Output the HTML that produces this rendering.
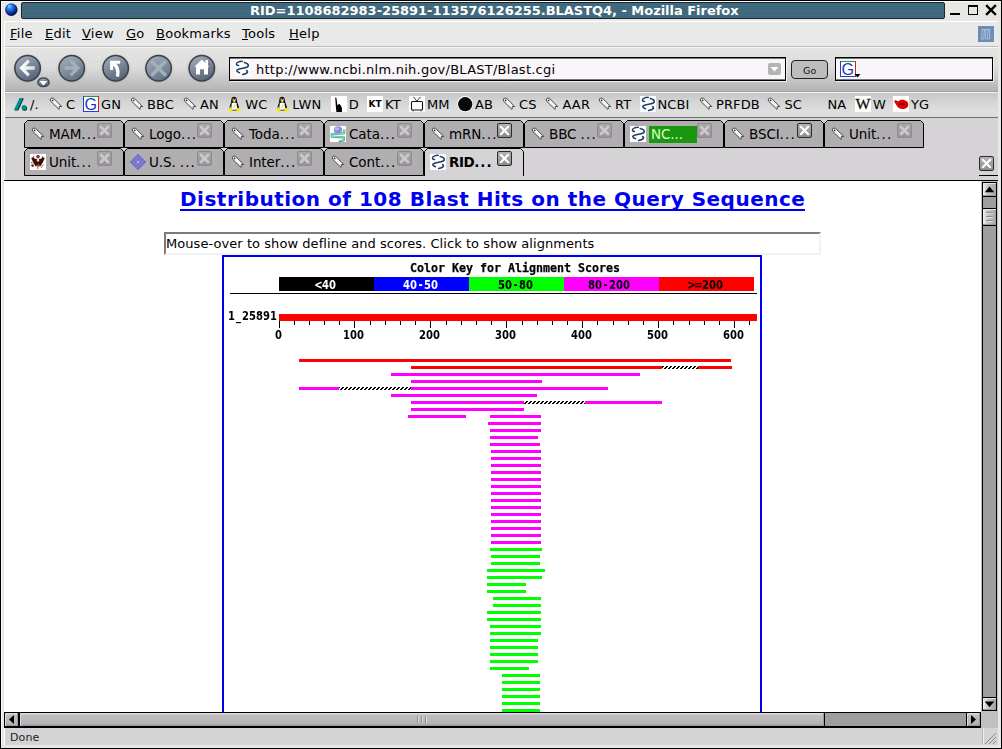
<!DOCTYPE html>
<html><head><meta charset="utf-8"><title>RID=1108682983-25891-113576126255.BLASTQ4, - Mozilla Firefox</title>
<style>
html,body{margin:0;padding:0;}
body{width:1002px;height:749px;overflow:hidden;position:relative;background:#e9e7e3;font-family:"DejaVu Sans","Liberation Sans",sans-serif;font-size:13px;color:#000;}
.a{position:absolute;}
.t{position:absolute;white-space:nowrap;line-height:16px;height:16px;letter-spacing:0.25px;}
u{text-decoration:underline;}
svg{position:absolute;overflow:visible;}
</style></head>
<body>
<div class="a" style="left:0px;top:0px;width:1002px;height:749px;background:#000;"></div>
<div class="a" style="left:1px;top:1px;width:1000px;height:747px;background:#e9e7e3;"></div>
<div class="a" style="left:1px;top:1px;width:1000px;height:1px;background:#fbfaf8;"></div>
<div class="a" style="left:1px;top:1px;width:1px;height:747px;background:#fbfaf8;"></div>
<div class="a" style="left:21px;top:2px;width:924px;height:17px;background:#3e6579;background-image:repeating-linear-gradient(to bottom,#456d81 0,#456d81 1px,#3e667a 1px,#3e667a 2px);border:1px solid #17252d;border-radius:2px;box-sizing:border-box;"></div>
<div class="t" style="left:250px;top:3px;color:#fff;font-weight:bold;font-size:13px;letter-spacing:-0.025px;">RID=1108682983-25891-113576126255.BLASTQ4, - Mozilla Firefox</div>
<div class="a" style="left:4px;top:21px;width:994px;height:724px;background:#fff;"></div>
<div class="a" style="left:5px;top:22px;width:993px;height:24px;background:#e9e9e9;"></div>
<div class="a" style="left:5px;top:46px;width:993px;height:1px;background:#bdbdbd;"></div>
<div class="a" style="left:5px;top:47px;width:993px;height:1px;background:#f6f6f6;"></div>
<div class="a" style="left:5px;top:48px;width:993px;height:43px;background:#d0d0d0;background:linear-gradient(to bottom,#e4e4e2 0%,#dcdcdc 45%,#c6c6c6 75%,#b4b4b4 100%);"></div>
<div class="a" style="left:5px;top:91px;width:993px;height:1px;background:#a0a0a0;"></div>
<div class="a" style="left:5px;top:92px;width:993px;height:1px;background:#f4f4f4;"></div>
<div class="a" style="left:5px;top:93px;width:993px;height:24px;background:#dadada;background:linear-gradient(to bottom,#c6c6c6 0%,#d4d4d4 35%,#dedede 75%,#dcdcdc 100%);"></div>
<div class="a" style="left:5px;top:117px;width:993px;height:1px;background:#6e6e6e;"></div>
<div class="a" style="left:5px;top:118px;width:993px;height:62px;background:#d5d3d5;"></div>
<div class="a" style="left:4px;top:180px;width:994px;height:1px;background:#000;"></div>
<div class="a" style="left:4px;top:181px;width:978px;height:531px;background:#fff;"></div>
<div class="a" style="left:4px;top:712px;width:994px;height:16px;background:#c1bfc1;"></div>
<div class="a" style="left:5px;top:728px;width:993px;height:17px;background:#d5d3d5;"></div>
<div class="a" style="left:1px;top:745px;width:1000px;height:3px;background:#e9e7e3;"></div>
<div class="t" style="left:10px;top:26px;"><u>F</u>ile</div>
<div class="t" style="left:45px;top:26px;"><u>E</u>dit</div>
<div class="t" style="left:82px;top:26px;"><u>V</u>iew</div>
<div class="t" style="left:126px;top:26px;"><u>G</u>o</div>
<div class="t" style="left:156px;top:26px;"><u>B</u>ookmarks</div>
<div class="t" style="left:242px;top:26px;"><u>T</u>ools</div>
<div class="t" style="left:289px;top:26px;"><u>H</u>elp</div>
<div class="t" style="left:10px;top:730px;font-size:11px;color:#222;letter-spacing:0.15px;">Done</div>
<svg style="left:0;top:0" width="1002" height="95" viewBox="0 0 1002 95">
<defs>
<linearGradient id="bg1" x1="0.2" y1="0" x2="0.7" y2="1"><stop offset="0" stop-color="#a3adb9"/><stop offset="0.45" stop-color="#7d8a9b"/><stop offset="1" stop-color="#526173"/></linearGradient>
<linearGradient id="bg2" x1="0.2" y1="0" x2="0.7" y2="1"><stop offset="0" stop-color="#a4aeba"/><stop offset="0.5" stop-color="#8290a2"/><stop offset="1" stop-color="#5f6e80"/></linearGradient>
<radialGradient id="halo"><stop offset="0.75" stop-color="#9a9a9a" stop-opacity="0.55"/><stop offset="1" stop-color="#c8c8c8" stop-opacity="0"/></radialGradient>
<linearGradient id="ar" gradientUnits="userSpaceOnUse" x1="20" y1="0" x2="36" y2="0"><stop offset="0" stop-color="#fff"/><stop offset="1" stop-color="#d2d8de"/></linearGradient>
</defs>
<circle cx="27.6" cy="68.8" r="16" fill="url(#halo)"/>
<circle cx="27.6" cy="68.3" r="12.7" fill="url(#bg1)" stroke="#39414a" stroke-width="1.5"/>
<circle cx="71.7" cy="68.8" r="16" fill="url(#halo)"/>
<circle cx="71.7" cy="68.3" r="12.7" fill="url(#bg2)" stroke="#39414a" stroke-width="1.5"/>
<circle cx="115.7" cy="68.8" r="16" fill="url(#halo)"/>
<circle cx="115.7" cy="68.3" r="12.7" fill="url(#bg1)" stroke="#39414a" stroke-width="1.5"/>
<circle cx="158.6" cy="68.8" r="16" fill="url(#halo)"/>
<circle cx="158.6" cy="68.3" r="12.7" fill="url(#bg2)" stroke="#39414a" stroke-width="1.5"/>
<circle cx="201.8" cy="68.8" r="16" fill="url(#halo)"/>
<circle cx="201.8" cy="68.3" r="12.7" fill="url(#bg1)" stroke="#39414a" stroke-width="1.5"/>
<path d="M28.800 60.600L21.600 68L28.800 75.400M22.500 68H34.800" fill="none" stroke="url(#ar)" stroke-width="3.300" stroke-linecap="butt" stroke-linejoin="miter"/>
<ellipse cx="43.500" cy="82.300" rx="5.700" ry="4.400" fill="url(#bg1)" stroke="#39414a" stroke-width="1.300"/><path d="M39.600 81h7.800l-3.900 4.400z" fill="#fff"/>
<path d="M70.600 60.600L77.800 68L70.600 75.400M77 68H64.600" fill="none" stroke="#a3afbd" stroke-width="3.300" stroke-linecap="butt" stroke-linejoin="miter"/>
<path d="M111.600 70V62.200H120.200" fill="none" stroke="#fff" stroke-width="3" stroke-linejoin="miter"/><path d="M112.500 63.200C116.500 65.500 119.200 69.500 117.400 76.600" fill="none" stroke="#fff" stroke-width="3.400"/>
<path d="M152.400 62l12.400 12.400M164.800 62l-12.400 12.400" stroke="#a3afbd" stroke-width="3.500" stroke-linecap="round" fill="none"/>
<path d="M201.800 59.400l7.600 7.400h-1.400v7.700h-4v-5.300h-4v5.300h-4v-7.700h-1.700z" fill="#fff"/><rect x="205.400" y="60" width="2.600" height="5" fill="#fff"/>
</svg>
<div class="a" style="left:229px;top:57px;width:557px;height:24px;box-sizing:border-box;border:1px solid #000;background:#f9f5f9;box-shadow:inset 0 1px 0 #777,inset 0 -1px 0 #777,1px 1px 0 #f0f0f0;"></div>
<svg style="left:234px;top:60px" width="16" height="16" viewBox="0 0 16 16"><rect width="16" height="16" fill="#fff"/><g fill="none" stroke="#1d3f69" stroke-linecap="round"><path d="M8.3 1.300C5 1.500 2.300 2.500 2.400 4.100C2.500 5 3.500 5.500 4.500 5.600" stroke-width="1.500"/><path d="M10.300 2.500C13 3.100 14.800 4.600 14.200 6.100C13.400 8 8 8 4.600 9.200C2.100 10.100 2.100 11.600 5.500 12.700" stroke-width="1.600"/><path d="M12.700 10.600C14.300 12 13.500 13.500 8.700 14.500" stroke-width="1.700"/></g></svg>
<div class="t" style="left:256px;top:62px;">http://www.ncbi.nlm.nih.gov/BLAST/Blast.cgi</div>
<div class="a" style="left:768px;top:63px;width:13px;height:12px;background:#b4b4b4;border-radius:2px;"></div>
<svg style="left:768px;top:63px" width="13" height="12" viewBox="0 0 13 12"><path d="M2.5 4h8l-4 4.6z" fill="#fff"/></svg>
<div class="a" style="left:791px;top:60px;width:37px;height:19px;box-sizing:border-box;border:1px solid #222;border-radius:4px;background:#bdbdbd;"></div>
<div class="t" style="left:803px;top:63px;font-size:9.5px;color:#111;">Go</div>
<div class="a" style="left:835px;top:57px;width:158px;height:24px;box-sizing:border-box;border:1px solid #000;background:#f9f5f9;box-shadow:inset 0 1px 0 #777,inset 0 -1px 0 #777,1px 1px 0 #f0f0f0;"></div>
<svg style="left:840px;top:61px" width="21" height="17" viewBox="0 0 21 17"><rect width="16" height="16" fill="#fff"/><rect width="16" height="1" fill="#2a9a3a"/><rect width="1" height="16" fill="#2040d0"/><rect x="15" width="1" height="16" fill="#d02020"/><rect y="15" width="16" height="1" fill="#2040d0"/><text x="1.500" y="14" font-family='"Liberation Sans",sans-serif' font-size="16.500" textLength="12.500" lengthAdjust="spacingAndGlyphs" fill="#1838c8">G</text><path d="M14.5 13h6l-3 3.4z" fill="#000"/></svg>
<svg style="left:978px;top:26px" width="16" height="16" viewBox="0 0 16 16"><rect width="16" height="16" fill="#6d8db3"/><path d="M3.5 3.5h9M4.5 3.5l-1 9.5h2.2l.8-9.5M8 3.5l-.6 9.5h2.2l.4-9.5M11.5 3.5l.3 9.5h-1.6" fill="none" stroke="#a9c0dc" stroke-width="1"/></svg>
<svg style="left:945px;top:0" width="56" height="20" viewBox="945 0 56 20" shape-rendering="crispEdges"><rect x="950" y="13" width="10" height="2" fill="#000"/><rect x="968" y="5" width="10" height="2" fill="#000"/><rect x="968" y="5" width="1" height="10" fill="#000"/><rect x="977" y="5" width="1" height="10" fill="#000"/><rect x="968" y="14" width="10" height="1" fill="#000"/><path d="M987 6l8 8M995 6l-8 8" stroke="#000" stroke-width="2.4" shape-rendering="auto" stroke-linecap="square"/></svg>
<svg style="left:4px;top:2px" width="15" height="15" viewBox="0 0 15 15"><defs><radialGradient id="gl" cx="0.38" cy="0.3" r="0.75"><stop offset="0" stop-color="#52b6f4"/><stop offset="0.4" stop-color="#1a62cc"/><stop offset="0.75" stop-color="#071e7c"/><stop offset="1" stop-color="#030a3c"/></radialGradient></defs><circle cx="7.3" cy="7.6" r="6.3" fill="url(#gl)"/><path d="M4 3.4c1.4-.8 3-.6 3.6.2-.6 1-2 1.2-2.2 2.4-.8.2-1.600-.8-1.400-2.600z" fill="#7cc0f4" opacity="0.85"/></svg>
<svg style="left:12px;top:96px" width="16" height="16" viewBox="0 0 16 16"><path d="M8.200 2.600h3.600l-5.600 12h-3.600z" fill="#111"/><circle cx="12.600" cy="12.200" r="2.500" fill="#111"/><path d="M7.500 2h3.600l-5.600 12h-3.600z" fill="#019090"/><circle cx="12" cy="11.600" r="2.500" fill="#019090"/></svg>
<div class="t" style="left:30px;top:97px;letter-spacing:0.12px;">/.</div>
<svg style="left:48px;top:96px" width="16" height="16" viewBox="0 0 16 16"><path d="M3.2 2.2h2.2l8.4 8.4-2.4-.2-.4 3-8.600-8.400v-2.000z" fill="#f4f4f4" stroke="#4a4a4a" stroke-width="1" stroke-linejoin="round"/><circle cx="4.6" cy="4.4" r="0.9" fill="#333"/></svg>
<div class="t" style="left:66px;top:97px;letter-spacing:0.12px;">C</div>
<svg style="left:83px;top:96px" width="16" height="16" viewBox="0 0 16 16"><rect width="16" height="16" fill="#fff"/><rect width="16" height="1" fill="#2a9a3a"/><rect width="1" height="16" fill="#2040d0"/><rect x="15" width="1" height="16" fill="#d02020"/><rect y="15" width="16" height="1" fill="#2040d0"/><text x="1.500" y="14" font-family='"Liberation Sans",sans-serif' font-size="16.500" textLength="12.500" lengthAdjust="spacingAndGlyphs" fill="#1838c8">G</text></svg>
<div class="t" style="left:101px;top:97px;letter-spacing:0.12px;">GN</div>
<svg style="left:129px;top:96px" width="16" height="16" viewBox="0 0 16 16"><path d="M3.2 2.2h2.2l8.4 8.4-2.4-.2-.4 3-8.600-8.400v-2.000z" fill="#f4f4f4" stroke="#4a4a4a" stroke-width="1" stroke-linejoin="round"/><circle cx="4.6" cy="4.4" r="0.9" fill="#333"/></svg>
<div class="t" style="left:147px;top:97px;letter-spacing:0.12px;">BBC</div>
<svg style="left:182px;top:96px" width="16" height="16" viewBox="0 0 16 16"><path d="M3.2 2.2h2.2l8.4 8.4-2.4-.2-.4 3-8.600-8.400v-2.000z" fill="#f4f4f4" stroke="#4a4a4a" stroke-width="1" stroke-linejoin="round"/><circle cx="4.6" cy="4.4" r="0.9" fill="#333"/></svg>
<div class="t" style="left:200px;top:97px;letter-spacing:0.12px;">AN</div>
<svg style="left:228px;top:96px" width="16" height="16" viewBox="0 0 16 16"><path d="M3.300 4.500C3.300 1.800 4.600 .800 6.100 .800S8.900 1.800 8.900 4.500C9.100 7 11 9.500 11 12.300C11 14 9.500 14.600 6.200 14.600S1.600 14 1.600 12.300C1.600 9.500 3.200 7 3.300 4.500z" fill="#0a0a0a"/><path d="M4 7.200C4.500 6.200 7.800 6.200 8.300 7.200C9.100 9.500 9.300 12 8.600 13.800H4C3.100 12 3.200 9.500 4 7.200z" fill="#fff"/><path d="M4.600 4.300L6.100 3.600L7.700 4.300L7.300 5.700L6.100 6.200L5 5.700z" fill="#f4e000"/><circle cx="5.100" cy="3.200" r=".650" fill="#fff"/><circle cx="7.200" cy="3.200" r=".650" fill="#fff"/><path d="M2.400 10.800L4.300 12.600L4.600 15.400L2.800 15.600L.400 14.200L1.200 12.400z" fill="#f4e800"/><path d="M9.600 11.400L8.400 13L8.300 15.500L10.500 15.300L13.600 13.600L11.800 12.800z" fill="#f4e800"/><rect x="5.800" y="8.500" width="1" height="3.500" fill="#ccc"/></svg>
<div class="t" style="left:245.2px;top:97px;letter-spacing:0.12px;">WC</div>
<svg style="left:276px;top:96px" width="16" height="16" viewBox="0 0 16 16"><path d="M3.300 4.500C3.300 1.800 4.600 .800 6.100 .800S8.900 1.800 8.900 4.500C9.100 7 11 9.500 11 12.300C11 14 9.500 14.600 6.200 14.600S1.600 14 1.600 12.300C1.600 9.500 3.200 7 3.300 4.500z" fill="#0a0a0a"/><path d="M4 7.200C4.500 6.200 7.800 6.200 8.300 7.200C9.100 9.500 9.300 12 8.600 13.800H4C3.100 12 3.200 9.500 4 7.200z" fill="#fff"/><path d="M4.600 4.300L6.100 3.600L7.700 4.300L7.300 5.700L6.100 6.200L5 5.700z" fill="#f4e000"/><circle cx="5.100" cy="3.200" r=".650" fill="#fff"/><circle cx="7.200" cy="3.200" r=".650" fill="#fff"/><path d="M2.400 10.800L4.300 12.600L4.600 15.400L2.800 15.600L.400 14.200L1.200 12.400z" fill="#f4e800"/><path d="M9.600 11.400L8.400 13L8.300 15.500L10.500 15.300L13.600 13.600L11.800 12.800z" fill="#f4e800"/><rect x="5.800" y="8.500" width="1" height="3.500" fill="#ccc"/></svg>
<div class="t" style="left:292.3px;top:97px;letter-spacing:0.12px;">LWN</div>
<svg style="left:331px;top:96px" width="16" height="16" viewBox="0 0 16 16"><rect width="16" height="16" fill="#fff"/><path d="M4.2 1.500l1.200.2 1 7.600 2-1.600 1.200 1.600 1.200 2.200.2 4.500h-5.600l-.6-6z" fill="#000"/></svg>
<div class="t" style="left:348.8px;top:97px;letter-spacing:0.12px;">D</div>
<svg style="left:367px;top:96px" width="16" height="16" viewBox="0 0 16 16"><rect width="16" height="16" fill="#fff"/><text x="1.500" y="10.800" font-family='"DejaVu Sans","Liberation Sans",sans-serif' font-weight="bold" font-size="8" textLength="13" lengthAdjust="spacingAndGlyphs" fill="#000">KT</text></svg>
<div class="t" style="left:385px;top:97px;letter-spacing:0.12px;">KT</div>
<svg style="left:409px;top:96px" width="16" height="16" viewBox="0 0 16 16"><rect width="16" height="16" fill="#fff"/><rect x="2.500" y="5.500" width="11" height="8.500" rx="1" fill="#fff" stroke="#111" stroke-width="1.100"/><path d="M4.500 .800l3.400 4.400 3.600-4.400M4 14.200v1.300M12 14.200v1.300" stroke="#222" stroke-width=".900" fill="none"/></svg>
<div class="t" style="left:427px;top:97px;letter-spacing:0.12px;">MM</div>
<svg style="left:457px;top:96px" width="16" height="16" viewBox="0 0 16 16"><ellipse cx="8" cy="8" rx="8" ry="8" fill="#fff"/><circle cx="8.200" cy="8.200" r="7.100" fill="#080808"/></svg>
<div class="t" style="left:475px;top:97px;letter-spacing:0.12px;">AB</div>
<svg style="left:501px;top:96px" width="16" height="16" viewBox="0 0 16 16"><path d="M3.2 2.2h2.2l8.4 8.4-2.4-.2-.4 3-8.600-8.400v-2.000z" fill="#f4f4f4" stroke="#4a4a4a" stroke-width="1" stroke-linejoin="round"/><circle cx="4.6" cy="4.4" r="0.9" fill="#333"/></svg>
<div class="t" style="left:519px;top:97px;letter-spacing:0.12px;">CS</div>
<svg style="left:544px;top:96px" width="16" height="16" viewBox="0 0 16 16"><path d="M3.2 2.2h2.2l8.4 8.4-2.4-.2-.4 3-8.600-8.400v-2.000z" fill="#f4f4f4" stroke="#4a4a4a" stroke-width="1" stroke-linejoin="round"/><circle cx="4.6" cy="4.4" r="0.9" fill="#333"/></svg>
<div class="t" style="left:562.5px;top:97px;letter-spacing:0.12px;">AAR</div>
<svg style="left:597px;top:96px" width="16" height="16" viewBox="0 0 16 16"><path d="M3.2 2.2h2.2l8.4 8.4-2.4-.2-.4 3-8.600-8.400v-2.000z" fill="#f4f4f4" stroke="#4a4a4a" stroke-width="1" stroke-linejoin="round"/><circle cx="4.6" cy="4.4" r="0.9" fill="#333"/></svg>
<div class="t" style="left:615px;top:97px;letter-spacing:0.12px;">RT</div>
<svg style="left:640px;top:96px" width="16" height="16" viewBox="0 0 16 16"><rect width="16" height="16" fill="#fff"/><g fill="none" stroke="#1d3f69" stroke-linecap="round"><path d="M8.3 1.300C5 1.500 2.300 2.500 2.400 4.100C2.500 5 3.500 5.500 4.500 5.600" stroke-width="1.500"/><path d="M10.300 2.500C13 3.100 14.800 4.600 14.200 6.100C13.400 8 8 8 4.600 9.200C2.100 10.100 2.100 11.600 5.500 12.700" stroke-width="1.600"/><path d="M12.700 10.600C14.300 12 13.500 13.500 8.700 14.500" stroke-width="1.700"/></g></svg>
<div class="t" style="left:657.5px;top:97px;letter-spacing:0.12px;">NCBI</div>
<svg style="left:698px;top:96px" width="16" height="16" viewBox="0 0 16 16"><path d="M3.2 2.2h2.2l8.4 8.4-2.4-.2-.4 3-8.600-8.400v-2.000z" fill="#f4f4f4" stroke="#4a4a4a" stroke-width="1" stroke-linejoin="round"/><circle cx="4.6" cy="4.4" r="0.9" fill="#333"/></svg>
<div class="t" style="left:716px;top:97px;letter-spacing:0.12px;">PRFDB</div>
<svg style="left:766px;top:96px" width="16" height="16" viewBox="0 0 16 16"><path d="M3.2 2.2h2.2l8.4 8.4-2.4-.2-.4 3-8.600-8.400v-2.000z" fill="#f4f4f4" stroke="#4a4a4a" stroke-width="1" stroke-linejoin="round"/><circle cx="4.6" cy="4.4" r="0.9" fill="#333"/></svg>
<div class="t" style="left:784.5px;top:97px;letter-spacing:0.12px;">SC</div>
<div class="t" style="left:827.5px;top:97px;letter-spacing:0.12px;">NA</div>
<svg style="left:855px;top:96px" width="16" height="16" viewBox="0 0 16 16"><rect width="16" height="16" fill="#fff"/><text x="0.500" y="13" font-family='"Liberation Serif",serif' font-size="14" textLength="15" lengthAdjust="spacingAndGlyphs" fill="#111" stroke="#111" stroke-width="0.3">W</text></svg>
<div class="t" style="left:873px;top:97px;letter-spacing:0.12px;">W</div>
<svg style="left:893px;top:96px" width="16" height="16" viewBox="0 0 16 16"><rect width="16" height="16" fill="#fff"/><path d="M1 5c1.500-1.500 3-.5 4 .5 2-2 6-2.500 9 0 1.500 1.500 1.800 4 .5 5.500-2 2.500-6 2.500-8.500 1-2-1.200-3-3.500-5-7z" fill="#e00000"/><path d="M6 8.500c2-1 4-1 6 .5" stroke="#400" stroke-width="1.200" fill="none"/></svg>
<div class="t" style="left:911px;top:97px;letter-spacing:0.12px;">YG</div>
<svg style="left:24px;top:120px" width="100" height="28" viewBox="0 0 100 28"><path d="M0.500 27.5V3.500L3.500 0.500H96.500L99.500 3.500V27.5Z" fill="#b0aeb0" stroke="#000" stroke-width="1"/></svg>
<svg style="left:30px;top:126px" width="16" height="16" viewBox="0 0 16 16"><path d="M3.2 2.2h2.2l8.4 8.4-2.4-.2-.4 3-8.600-8.400v-2.000z" fill="#f4f4f4" stroke="#4a4a4a" stroke-width="1" stroke-linejoin="round"/><circle cx="4.6" cy="4.4" r="0.9" fill="#333"/></svg>
<div class="t" style="left:49px;top:126px;font-size:13.5px;letter-spacing:-0.1px;">MAM<span style="letter-spacing:1.1px">...</span></div>
<div class="a" style="left:97px;top:123px;width:15px;height:15px;box-sizing:border-box;border:1px solid #8c8a8c;border-radius:2px;background:linear-gradient(#a9a7a9,#979597);"></div><svg style="left:97px;top:123px" width="15" height="15" viewBox="0 0 15 15"><path d="M4 4l7 7M11 4l-7 7" stroke="#cbc9cb" stroke-width="2.700" stroke-linecap="round"/></svg>
<svg style="left:124px;top:120px" width="100" height="28" viewBox="0 0 100 28"><path d="M0.500 27.5V3.500L3.500 0.500H96.500L99.500 3.500V27.5Z" fill="#b0aeb0" stroke="#000" stroke-width="1"/></svg>
<svg style="left:130px;top:126px" width="16" height="16" viewBox="0 0 16 16"><path d="M3.2 2.2h2.2l8.4 8.4-2.4-.2-.4 3-8.600-8.400v-2.000z" fill="#f4f4f4" stroke="#4a4a4a" stroke-width="1" stroke-linejoin="round"/><circle cx="4.6" cy="4.4" r="0.9" fill="#333"/></svg>
<div class="t" style="left:149px;top:126px;font-size:13.5px;letter-spacing:-0.1px;">Logo<span style="letter-spacing:1.1px">...</span></div>
<div class="a" style="left:197px;top:123px;width:15px;height:15px;box-sizing:border-box;border:1px solid #8c8a8c;border-radius:2px;background:linear-gradient(#a9a7a9,#979597);"></div><svg style="left:197px;top:123px" width="15" height="15" viewBox="0 0 15 15"><path d="M4 4l7 7M11 4l-7 7" stroke="#cbc9cb" stroke-width="2.700" stroke-linecap="round"/></svg>
<svg style="left:224px;top:120px" width="100" height="28" viewBox="0 0 100 28"><path d="M0.500 27.5V3.500L3.500 0.500H96.500L99.500 3.500V27.5Z" fill="#b0aeb0" stroke="#000" stroke-width="1"/></svg>
<svg style="left:230px;top:126px" width="16" height="16" viewBox="0 0 16 16"><path d="M3.2 2.2h2.2l8.4 8.4-2.4-.2-.4 3-8.600-8.400v-2.000z" fill="#f4f4f4" stroke="#4a4a4a" stroke-width="1" stroke-linejoin="round"/><circle cx="4.6" cy="4.4" r="0.9" fill="#333"/></svg>
<div class="t" style="left:249px;top:126px;font-size:13.5px;letter-spacing:-0.1px;">Toda<span style="letter-spacing:1.1px">...</span></div>
<div class="a" style="left:297px;top:123px;width:15px;height:15px;box-sizing:border-box;border:1px solid #8c8a8c;border-radius:2px;background:linear-gradient(#a9a7a9,#979597);"></div><svg style="left:297px;top:123px" width="15" height="15" viewBox="0 0 15 15"><path d="M4 4l7 7M11 4l-7 7" stroke="#cbc9cb" stroke-width="2.700" stroke-linecap="round"/></svg>
<svg style="left:324px;top:120px" width="100" height="28" viewBox="0 0 100 28"><path d="M0.500 27.5V3.500L3.500 0.500H96.500L99.500 3.500V27.5Z" fill="#b0aeb0" stroke="#000" stroke-width="1"/></svg>
<svg style="left:330px;top:126px" width="16" height="16" viewBox="0 0 16 16"><rect width="16" height="16" fill="#fff"/><path d="M14.200 3.500v3.600l-12.400 1v2.600l12 .600v3l-5 1.200" fill="none" stroke="#2fae84" stroke-width="2.200" stroke-linejoin="round"/><path d="M14.200 4v3l-12.400 1.100v2.400l12 .600v2.600l-4.600 1.100" fill="none" stroke="#bfe9d9" stroke-width=".800"/><ellipse cx="8" cy="4" rx="4.100" ry="3.700" fill="#8c8cd6"/><ellipse cx="7" cy="2.800" rx="2.200" ry="1.600" fill="#b9b9ec"/></svg>
<div class="t" style="left:349px;top:126px;font-size:13.5px;letter-spacing:-0.1px;">Cata<span style="letter-spacing:1.1px">...</span></div>
<div class="a" style="left:397px;top:123px;width:15px;height:15px;box-sizing:border-box;border:1px solid #8c8a8c;border-radius:2px;background:linear-gradient(#a9a7a9,#979597);"></div><svg style="left:397px;top:123px" width="15" height="15" viewBox="0 0 15 15"><path d="M4 4l7 7M11 4l-7 7" stroke="#cbc9cb" stroke-width="2.700" stroke-linecap="round"/></svg>
<svg style="left:424px;top:120px" width="100" height="28" viewBox="0 0 100 28"><path d="M0.500 27.5V3.500L3.500 0.500H96.500L99.500 3.500V27.5Z" fill="#b0aeb0" stroke="#000" stroke-width="1"/></svg>
<svg style="left:430px;top:126px" width="16" height="16" viewBox="0 0 16 16"><path d="M3.2 2.2h2.2l8.4 8.4-2.4-.2-.4 3-8.600-8.400v-2.000z" fill="#f4f4f4" stroke="#4a4a4a" stroke-width="1" stroke-linejoin="round"/><circle cx="4.6" cy="4.4" r="0.9" fill="#333"/></svg>
<div class="t" style="left:449px;top:126px;font-size:13.5px;letter-spacing:-0.1px;">mRN<span style="letter-spacing:1.1px">...</span></div>
<div class="a" style="left:497px;top:123px;width:15px;height:15px;box-sizing:border-box;border:1px solid #2c2c2c;border-radius:2px;background:linear-gradient(#b4b2b4,#8e8c8e);"></div><svg style="left:497px;top:123px" width="15" height="15" viewBox="0 0 15 15"><path d="M3.800 3.800l7.400 7.400M11.200 3.800l-7.400 7.400" stroke="#fff" stroke-width="2.200" stroke-linecap="round"/></svg>
<svg style="left:524px;top:120px" width="100" height="28" viewBox="0 0 100 28"><path d="M0.500 27.5V3.500L3.500 0.500H96.500L99.500 3.500V27.5Z" fill="#b0aeb0" stroke="#000" stroke-width="1"/></svg>
<svg style="left:530px;top:126px" width="16" height="16" viewBox="0 0 16 16"><path d="M3.2 2.2h2.2l8.4 8.4-2.4-.2-.4 3-8.600-8.400v-2.000z" fill="#f4f4f4" stroke="#4a4a4a" stroke-width="1" stroke-linejoin="round"/><circle cx="4.6" cy="4.4" r="0.9" fill="#333"/></svg>
<div class="t" style="left:549px;top:126px;font-size:13.5px;letter-spacing:-0.1px;">BBC <span style="letter-spacing:1.1px">...</span></div>
<div class="a" style="left:597px;top:123px;width:15px;height:15px;box-sizing:border-box;border:1px solid #8c8a8c;border-radius:2px;background:linear-gradient(#a9a7a9,#979597);"></div><svg style="left:597px;top:123px" width="15" height="15" viewBox="0 0 15 15"><path d="M4 4l7 7M11 4l-7 7" stroke="#cbc9cb" stroke-width="2.700" stroke-linecap="round"/></svg>
<svg style="left:624px;top:120px" width="100" height="28" viewBox="0 0 100 28"><path d="M0.500 27.5V3.500L3.500 0.500H96.500L99.500 3.500V27.5Z" fill="#b0aeb0" stroke="#000" stroke-width="1"/></svg>
<svg style="left:630px;top:126px" width="16" height="16" viewBox="0 0 16 16"><rect width="16" height="16" fill="#fff"/><g fill="none" stroke="#1d3f69" stroke-linecap="round"><path d="M8.3 1.300C5 1.500 2.300 2.500 2.400 4.100C2.500 5 3.500 5.500 4.500 5.600" stroke-width="1.500"/><path d="M10.300 2.500C13 3.100 14.800 4.600 14.200 6.100C13.400 8 8 8 4.600 9.200C2.100 10.100 2.100 11.600 5.500 12.700" stroke-width="1.600"/><path d="M12.700 10.600C14.300 12 13.500 13.500 8.700 14.500" stroke-width="1.700"/></g></svg>
<div class="a" style="left:649px;top:126px;width:48px;height:17px;background:#19980f;"></div>
<div class="t" style="left:651px;top:126px;font-size:13.5px;letter-spacing:-0.1px;color:#dfffc0;">NC...</div>
<div class="a" style="left:697px;top:123px;width:15px;height:15px;box-sizing:border-box;border:1px solid #8c8a8c;border-radius:2px;background:linear-gradient(#a9a7a9,#979597);"></div><svg style="left:697px;top:123px" width="15" height="15" viewBox="0 0 15 15"><path d="M4 4l7 7M11 4l-7 7" stroke="#cbc9cb" stroke-width="2.700" stroke-linecap="round"/></svg>
<svg style="left:724px;top:120px" width="100" height="28" viewBox="0 0 100 28"><path d="M0.500 27.5V3.500L3.500 0.500H96.500L99.500 3.500V27.5Z" fill="#b0aeb0" stroke="#000" stroke-width="1"/></svg>
<svg style="left:730px;top:126px" width="16" height="16" viewBox="0 0 16 16"><path d="M3.2 2.2h2.2l8.4 8.4-2.4-.2-.4 3-8.600-8.400v-2.000z" fill="#f4f4f4" stroke="#4a4a4a" stroke-width="1" stroke-linejoin="round"/><circle cx="4.6" cy="4.4" r="0.9" fill="#333"/></svg>
<div class="t" style="left:749px;top:126px;font-size:13.5px;letter-spacing:-0.1px;">BSCI<span style="letter-spacing:1.1px">...</span></div>
<div class="a" style="left:797px;top:123px;width:15px;height:15px;box-sizing:border-box;border:1px solid #2c2c2c;border-radius:2px;background:linear-gradient(#b4b2b4,#8e8c8e);"></div><svg style="left:797px;top:123px" width="15" height="15" viewBox="0 0 15 15"><path d="M3.800 3.800l7.400 7.400M11.200 3.800l-7.400 7.400" stroke="#fff" stroke-width="2.200" stroke-linecap="round"/></svg>
<svg style="left:824px;top:120px" width="100" height="28" viewBox="0 0 100 28"><path d="M0.500 27.5V3.500L3.500 0.500H96.500L99.500 3.500V27.5Z" fill="#b0aeb0" stroke="#000" stroke-width="1"/></svg>
<svg style="left:830px;top:126px" width="16" height="16" viewBox="0 0 16 16"><path d="M3.2 2.2h2.2l8.4 8.4-2.4-.2-.4 3-8.600-8.400v-2.000z" fill="#f4f4f4" stroke="#4a4a4a" stroke-width="1" stroke-linejoin="round"/><circle cx="4.6" cy="4.4" r="0.9" fill="#333"/></svg>
<div class="t" style="left:849px;top:126px;font-size:13.5px;letter-spacing:-0.1px;">Unit<span style="letter-spacing:1.1px">...</span></div>
<div class="a" style="left:897px;top:123px;width:15px;height:15px;box-sizing:border-box;border:1px solid #8c8a8c;border-radius:2px;background:linear-gradient(#a9a7a9,#979597);"></div><svg style="left:897px;top:123px" width="15" height="15" viewBox="0 0 15 15"><path d="M4 4l7 7M11 4l-7 7" stroke="#cbc9cb" stroke-width="2.700" stroke-linecap="round"/></svg>
<svg style="left:24px;top:148px" width="100" height="28" viewBox="0 0 100 28"><path d="M0.500 27.5V3.500L3.500 0.500H96.500L99.500 3.500V27.5Z" fill="#b0aeb0" stroke="#000" stroke-width="1"/></svg>
<svg style="left:30px;top:154px" width="16" height="16" viewBox="0 0 16 16"><rect width="16" height="16" fill="#fff"/><g fill="#3d0e0a"><path d="M1.200 3.900L3.500 3.100L4.600 4.400L6.600 6L7.200 10L5.600 12.200L3.600 9.200L2.300 6.400z"/><path d="M14.800 3.900L12.500 3.100L11.400 4.400L9.400 6L8.800 10L10.400 12.200L12.400 9.200L13.700 6.400z"/><circle cx="8" cy="2.600" r="1.700"/><path d="M5.600 7.500H10.400L9.600 12.600H6.400z"/><path d="M5 4.800H11V7.600H5z"/></g><ellipse cx="8" cy="6" rx="1.300" ry="1.500" fill="#f2dcc6"/><circle cx="8" cy="2.900" r=".700" fill="#e8c8b0"/><circle cx="2.600" cy="11.600" r="1.300" fill="#6a2810"/><circle cx="1.800" cy="8.800" r=".800" fill="#a05820"/><path d="M8.200 10.500L7.600 15" stroke="#d48432" stroke-width="1.300" fill="none"/><path d="M11 13.500L13.800 10.200" stroke="#a04818" stroke-width="1.200" stroke-dasharray="1.200 .800" fill="none"/><circle cx="3.800" cy="2.600" r=".500" fill="#8a3820"/><circle cx="12.300" cy="2.600" r=".500" fill="#8a3820"/></svg>
<div class="t" style="left:49px;top:154px;font-size:13.5px;letter-spacing:-0.1px;">Unit<span style="letter-spacing:1.1px">...</span></div>
<div class="a" style="left:97px;top:151px;width:15px;height:15px;box-sizing:border-box;border:1px solid #8c8a8c;border-radius:2px;background:linear-gradient(#a9a7a9,#979597);"></div><svg style="left:97px;top:151px" width="15" height="15" viewBox="0 0 15 15"><path d="M4 4l7 7M11 4l-7 7" stroke="#cbc9cb" stroke-width="2.700" stroke-linecap="round"/></svg>
<svg style="left:124px;top:148px" width="100" height="28" viewBox="0 0 100 28"><path d="M0.500 27.5V3.500L3.500 0.500H96.500L99.500 3.500V27.5Z" fill="#b0aeb0" stroke="#000" stroke-width="1"/></svg>
<svg style="left:130px;top:154px" width="16" height="16" viewBox="0 0 16 16"><path d="M8 -0.200l8.200 8.200-8.200 8.200-8.200-8.200z" fill="#6b6bcf"/><path d="M4 4l8 8M12 4l-8 8M2 6l8 8M6 2l8 8M14 6l-8 8M10 2l-8 8" stroke="#9a98c8" stroke-width="0.600" fill="none"/><circle cx="8" cy="8" r="1.300" fill="#b8b6c8"/></svg>
<div class="t" style="left:149px;top:154px;font-size:13.5px;letter-spacing:-0.1px;">U.S. <span style="letter-spacing:1.1px">...</span></div>
<div class="a" style="left:197px;top:151px;width:15px;height:15px;box-sizing:border-box;border:1px solid #8c8a8c;border-radius:2px;background:linear-gradient(#a9a7a9,#979597);"></div><svg style="left:197px;top:151px" width="15" height="15" viewBox="0 0 15 15"><path d="M4 4l7 7M11 4l-7 7" stroke="#cbc9cb" stroke-width="2.700" stroke-linecap="round"/></svg>
<svg style="left:224px;top:148px" width="100" height="28" viewBox="0 0 100 28"><path d="M0.500 27.5V3.500L3.500 0.500H96.500L99.500 3.500V27.5Z" fill="#b0aeb0" stroke="#000" stroke-width="1"/></svg>
<svg style="left:230px;top:154px" width="16" height="16" viewBox="0 0 16 16"><path d="M3.2 2.2h2.2l8.4 8.4-2.4-.2-.4 3-8.600-8.400v-2.000z" fill="#f4f4f4" stroke="#4a4a4a" stroke-width="1" stroke-linejoin="round"/><circle cx="4.6" cy="4.4" r="0.9" fill="#333"/></svg>
<div class="t" style="left:249px;top:154px;font-size:13.5px;letter-spacing:-0.1px;">Inter<span style="letter-spacing:1.1px">...</span></div>
<div class="a" style="left:297px;top:151px;width:15px;height:15px;box-sizing:border-box;border:1px solid #8c8a8c;border-radius:2px;background:linear-gradient(#a9a7a9,#979597);"></div><svg style="left:297px;top:151px" width="15" height="15" viewBox="0 0 15 15"><path d="M4 4l7 7M11 4l-7 7" stroke="#cbc9cb" stroke-width="2.700" stroke-linecap="round"/></svg>
<svg style="left:324px;top:148px" width="100" height="28" viewBox="0 0 100 28"><path d="M0.500 27.5V3.500L3.500 0.500H96.500L99.500 3.500V27.5Z" fill="#b0aeb0" stroke="#000" stroke-width="1"/></svg>
<svg style="left:330px;top:154px" width="16" height="16" viewBox="0 0 16 16"><path d="M3.2 2.2h2.2l8.4 8.4-2.4-.2-.4 3-8.600-8.400v-2.000z" fill="#f4f4f4" stroke="#4a4a4a" stroke-width="1" stroke-linejoin="round"/><circle cx="4.6" cy="4.4" r="0.9" fill="#333"/></svg>
<div class="t" style="left:349px;top:154px;font-size:13.5px;letter-spacing:-0.1px;">Cont<span style="letter-spacing:1.1px">...</span></div>
<div class="a" style="left:397px;top:151px;width:15px;height:15px;box-sizing:border-box;border:1px solid #8c8a8c;border-radius:2px;background:linear-gradient(#a9a7a9,#979597);"></div><svg style="left:397px;top:151px" width="15" height="15" viewBox="0 0 15 15"><path d="M4 4l7 7M11 4l-7 7" stroke="#cbc9cb" stroke-width="2.700" stroke-linecap="round"/></svg>
<svg style="left:424px;top:148px" width="100" height="28" viewBox="0 0 100 28"><path d="M0.500 28V3.500L3.500 0.500H96.500L99.500 3.500V28" fill="#d5d3d5" stroke="#000" stroke-width="1"/><rect x="1" y="27" width="98" height="5" fill="#d5d3d5"/></svg>
<svg style="left:430px;top:154px" width="16" height="16" viewBox="0 0 16 16"><rect width="16" height="16" fill="#fff"/><g fill="none" stroke="#1d3f69" stroke-linecap="round"><path d="M8.3 1.300C5 1.500 2.300 2.500 2.400 4.100C2.500 5 3.500 5.500 4.500 5.600" stroke-width="1.500"/><path d="M10.300 2.500C13 3.100 14.800 4.600 14.200 6.100C13.400 8 8 8 4.600 9.200C2.100 10.100 2.100 11.600 5.500 12.700" stroke-width="1.600"/><path d="M12.700 10.600C14.300 12 13.500 13.500 8.700 14.500" stroke-width="1.700"/></g></svg>
<div class="t" style="left:449px;top:154px;font-size:13.5px;font-weight:bold;letter-spacing:-0.5px;">RID<span style="letter-spacing:1.1px">...</span></div>
<div class="a" style="left:497px;top:151px;width:15px;height:15px;box-sizing:border-box;border:1px solid #2c2c2c;border-radius:2px;background:linear-gradient(#b4b2b4,#8e8c8e);"></div><svg style="left:497px;top:151px" width="15" height="15" viewBox="0 0 15 15"><path d="M3.800 3.800l7.400 7.400M11.200 3.800l-7.400 7.400" stroke="#fff" stroke-width="2.200" stroke-linecap="round"/></svg>
<div class="a" style="left:979px;top:156px;width:15px;height:15px;box-sizing:border-box;border:1px solid #2c2c2c;border-radius:2px;background:linear-gradient(#b4b2b4,#8e8c8e);"></div><svg style="left:979px;top:156px" width="15" height="15" viewBox="0 0 15 15"><path d="M3.800 3.800l7.400 7.400M11.200 3.800l-7.400 7.400" stroke="#fff" stroke-width="2.200" stroke-linecap="round"/></svg>
<div class="a" style="left:979px;top:175px;width:19px;height:1px;background:#000;"></div>
<div class="t" style="left:180px;top:186px;height:26px;line-height:26px;font-size:20px;letter-spacing:0.5px;font-weight:bold;color:#0000ee;"><a style="color:#0000ee;text-decoration:none;">Distribution of 108 Blast Hits on the Query Sequence</a></div>
<div class="a" style="left:180px;top:209px;width:625px;height:2px;background:#0000ee;"></div>
<div class="a" style="left:164px;top:232px;width:657px;height:23px;box-sizing:border-box;background:#fff;border:2px solid;border-color:#7b7b7b #f2f2f2 #f2f2f2 #7b7b7b;"></div>
<div class="t" style="left:166px;top:236px;font-size:13px;letter-spacing:0.06px;">Mouse-over to show defline and scores. Click to show alignments</div>
<svg class="a" style="left:0;top:0;will-change:transform" width="982" height="712" viewBox="0 0 982 712" shape-rendering="crispEdges">
<defs><pattern id="h" x="662" y="359" width="4" height="7" patternUnits="userSpaceOnUse"><rect width="4" height="3" fill="#fff"/><rect x="0" y="0" width="2" height="1" fill="#000"/><rect x="3" y="1" width="1" height="1" fill="#000"/><rect x="0" y="1" width="1" height="1" fill="#000"/><rect x="2" y="2" width="2" height="1" fill="#000"/></pattern></defs>
<rect x="222" y="255" width="540" height="2" fill="#0000ee"/>
<rect x="222" y="255" width="2" height="457" fill="#0000ee"/>
<rect x="760" y="255" width="2" height="457" fill="#0000ee"/>
<rect x="279" y="277" width="95" height="14" fill="#000000"/>
<rect x="374" y="277" width="95" height="14" fill="#0000ff"/>
<rect x="469" y="277" width="95" height="14" fill="#00ff00"/>
<rect x="564" y="277" width="95" height="14" fill="#ff00ff"/>
<rect x="659" y="277" width="95" height="14" fill="#ff0000"/>
<rect x="230" y="293" width="527" height="1" fill="#000"/>
<rect x="279" y="314" width="478" height="7" fill="#ff0000"/>
<rect x="279" y="321" width="1" height="7" fill="#000"/>
<rect x="294" y="321" width="1" height="4" fill="#000"/>
<rect x="309" y="321" width="1" height="4" fill="#000"/>
<rect x="324" y="321" width="1" height="4" fill="#000"/>
<rect x="339" y="321" width="1" height="4" fill="#000"/>
<rect x="354" y="321" width="1" height="7" fill="#000"/>
<rect x="370" y="321" width="1" height="4" fill="#000"/>
<rect x="385" y="321" width="1" height="4" fill="#000"/>
<rect x="400" y="321" width="1" height="4" fill="#000"/>
<rect x="415" y="321" width="1" height="4" fill="#000"/>
<rect x="430" y="321" width="1" height="7" fill="#000"/>
<rect x="446" y="321" width="1" height="4" fill="#000"/>
<rect x="461" y="321" width="1" height="4" fill="#000"/>
<rect x="476" y="321" width="1" height="4" fill="#000"/>
<rect x="491" y="321" width="1" height="4" fill="#000"/>
<rect x="506" y="321" width="1" height="7" fill="#000"/>
<rect x="522" y="321" width="1" height="4" fill="#000"/>
<rect x="537" y="321" width="1" height="4" fill="#000"/>
<rect x="552" y="321" width="1" height="4" fill="#000"/>
<rect x="567" y="321" width="1" height="4" fill="#000"/>
<rect x="582" y="321" width="1" height="7" fill="#000"/>
<rect x="597" y="321" width="1" height="4" fill="#000"/>
<rect x="613" y="321" width="1" height="4" fill="#000"/>
<rect x="628" y="321" width="1" height="4" fill="#000"/>
<rect x="643" y="321" width="1" height="4" fill="#000"/>
<rect x="658" y="321" width="1" height="7" fill="#000"/>
<rect x="673" y="321" width="1" height="4" fill="#000"/>
<rect x="689" y="321" width="1" height="4" fill="#000"/>
<rect x="704" y="321" width="1" height="4" fill="#000"/>
<rect x="719" y="321" width="1" height="4" fill="#000"/>
<rect x="734" y="321" width="1" height="7" fill="#000"/>
<rect x="749" y="321" width="1" height="4" fill="#000"/>
<rect x="299" y="359" width="432" height="3" fill="#ff0000"/>
<rect x="411" y="366" width="251" height="3" fill="#ff0000"/>
<rect x="662" y="366" width="36" height="3" fill="url(#h)"/>
<rect x="698" y="366" width="34" height="3" fill="#ff0000"/>
<rect x="391" y="373" width="249" height="3" fill="#ff00ff"/>
<rect x="411" y="380" width="131" height="3" fill="#ff00ff"/>
<rect x="299" y="387" width="40" height="3" fill="#ff00ff"/>
<rect x="339" y="387" width="72" height="3" fill="url(#h)"/>
<rect x="411" y="387" width="197" height="3" fill="#ff00ff"/>
<rect x="391" y="394" width="146" height="3" fill="#ff00ff"/>
<rect x="411" y="401" width="113" height="3" fill="#ff00ff"/>
<rect x="524" y="401" width="61" height="3" fill="url(#h)"/>
<rect x="585" y="401" width="77" height="3" fill="#ff00ff"/>
<rect x="411" y="408" width="113" height="3" fill="#ff00ff"/>
<rect x="408" y="415" width="58" height="3" fill="#ff00ff"/>
<rect x="490" y="415" width="51" height="3" fill="#ff00ff"/>
<rect x="488" y="422" width="53" height="3" fill="#ff00ff"/>
<rect x="490" y="429" width="51" height="3" fill="#ff00ff"/>
<rect x="490" y="436" width="48" height="3" fill="#ff00ff"/>
<rect x="490" y="443" width="50" height="3" fill="#ff00ff"/>
<rect x="491" y="450" width="50" height="3" fill="#ff00ff"/>
<rect x="491" y="457" width="50" height="3" fill="#ff00ff"/>
<rect x="491" y="464" width="50" height="3" fill="#ff00ff"/>
<rect x="491" y="471" width="50" height="3" fill="#ff00ff"/>
<rect x="491" y="478" width="50" height="3" fill="#ff00ff"/>
<rect x="491" y="485" width="50" height="3" fill="#ff00ff"/>
<rect x="491" y="492" width="50" height="3" fill="#ff00ff"/>
<rect x="491" y="499" width="50" height="3" fill="#ff00ff"/>
<rect x="491" y="506" width="50" height="3" fill="#ff00ff"/>
<rect x="491" y="513" width="50" height="3" fill="#ff00ff"/>
<rect x="491" y="520" width="50" height="3" fill="#ff00ff"/>
<rect x="491" y="527" width="50" height="3" fill="#ff00ff"/>
<rect x="491" y="534" width="50" height="3" fill="#ff00ff"/>
<rect x="491" y="541" width="50" height="3" fill="#ff00ff"/>
<rect x="490" y="548" width="52" height="3" fill="#00ff00"/>
<rect x="491" y="555" width="49" height="3" fill="#00ff00"/>
<rect x="491" y="562" width="49" height="3" fill="#00ff00"/>
<rect x="487" y="569" width="58" height="3" fill="#00ff00"/>
<rect x="487" y="576" width="55" height="3" fill="#00ff00"/>
<rect x="487" y="583" width="39" height="3" fill="#00ff00"/>
<rect x="487" y="590" width="39" height="3" fill="#00ff00"/>
<rect x="493" y="597" width="48" height="3" fill="#00ff00"/>
<rect x="493" y="604" width="48" height="3" fill="#00ff00"/>
<rect x="487" y="611" width="54" height="3" fill="#00ff00"/>
<rect x="487" y="618" width="54" height="3" fill="#00ff00"/>
<rect x="490" y="625" width="51" height="3" fill="#00ff00"/>
<rect x="490" y="632" width="51" height="3" fill="#00ff00"/>
<rect x="490" y="639" width="48" height="3" fill="#00ff00"/>
<rect x="490" y="646" width="48" height="3" fill="#00ff00"/>
<rect x="490" y="653" width="48" height="3" fill="#00ff00"/>
<rect x="490" y="660" width="48" height="3" fill="#00ff00"/>
<rect x="490" y="667" width="39" height="3" fill="#00ff00"/>
<rect x="502" y="674" width="38" height="3" fill="#00ff00"/>
<rect x="502" y="681" width="38" height="3" fill="#00ff00"/>
<rect x="502" y="688" width="38" height="3" fill="#00ff00"/>
<rect x="502" y="695" width="38" height="3" fill="#00ff00"/>
<rect x="502" y="702" width="38" height="3" fill="#00ff00"/>
<rect x="502" y="709" width="38" height="3" fill="#00ff00"/>
<text x="410" y="272" textLength="210" lengthAdjust="spacingAndGlyphs" fill="#000" stroke="#000" stroke-width="0.25" font-family='"DejaVu Sans Mono","Liberation Mono",monospace' font-weight="bold" font-size="12.3">Color Key for Alignment Scores</text>
<text transform="translate(315,289) scale(0.815,1)" x="4.29 12.88 21.47" y="0" text-anchor="middle" fill="#fff" font-family='"DejaVu Sans","Liberation Sans",sans-serif' font-weight="bold" font-size="12.3">&lt;40</text>
<text transform="translate(403,289) scale(0.815,1)" x="4.29 12.88 21.47 30.06 38.65" y="0" text-anchor="middle" fill="#fff" font-family='"DejaVu Sans","Liberation Sans",sans-serif' font-weight="bold" font-size="12.3">40-50</text>
<text transform="translate(498,289) scale(0.815,1)" x="4.29 12.88 21.47 30.06 38.65" y="0" text-anchor="middle" fill="#000" font-family='"DejaVu Sans","Liberation Sans",sans-serif' font-weight="bold" font-size="12.3">50-80</text>
<text transform="translate(588,289) scale(0.815,1)" x="4.29 12.88 21.47 30.06 38.65 47.24" y="0" text-anchor="middle" fill="#000" font-family='"DejaVu Sans","Liberation Sans",sans-serif' font-weight="bold" font-size="12.3">80-200</text>
<text transform="translate(688,289) scale(0.815,1)" x="4.29 12.88 21.47 30.06 38.65" y="0" text-anchor="middle" fill="#000" font-family='"DejaVu Sans","Liberation Sans",sans-serif' font-weight="bold" font-size="12.3">&gt;=200</text>
<text transform="translate(228,320) scale(0.815,1)" x="4.29 12.88 21.47 30.06 38.65 47.24 55.83" y="0" text-anchor="middle" fill="#000" font-family='"DejaVu Sans","Liberation Sans",sans-serif' font-weight="bold" font-size="12.3">1_25891</text>
<text transform="translate(275,339) scale(0.815,1)" x="4.29" y="0" text-anchor="middle" fill="#000" font-family='"DejaVu Sans","Liberation Sans",sans-serif' font-weight="bold" font-size="12.3">0</text>
<text transform="translate(343,339) scale(0.815,1)" x="4.29 12.88 21.47" y="0" text-anchor="middle" fill="#000" font-family='"DejaVu Sans","Liberation Sans",sans-serif' font-weight="bold" font-size="12.3">100</text>
<text transform="translate(419,339) scale(0.815,1)" x="4.29 12.88 21.47" y="0" text-anchor="middle" fill="#000" font-family='"DejaVu Sans","Liberation Sans",sans-serif' font-weight="bold" font-size="12.3">200</text>
<text transform="translate(495,339) scale(0.815,1)" x="4.29 12.88 21.47" y="0" text-anchor="middle" fill="#000" font-family='"DejaVu Sans","Liberation Sans",sans-serif' font-weight="bold" font-size="12.3">300</text>
<text transform="translate(571,339) scale(0.815,1)" x="4.29 12.88 21.47" y="0" text-anchor="middle" fill="#000" font-family='"DejaVu Sans","Liberation Sans",sans-serif' font-weight="bold" font-size="12.3">400</text>
<text transform="translate(647,339) scale(0.815,1)" x="4.29 12.88 21.47" y="0" text-anchor="middle" fill="#000" font-family='"DejaVu Sans","Liberation Sans",sans-serif' font-weight="bold" font-size="12.3">500</text>
<text transform="translate(723,339) scale(0.815,1)" x="4.29 12.88 21.47" y="0" text-anchor="middle" fill="#000" font-family='"DejaVu Sans","Liberation Sans",sans-serif' font-weight="bold" font-size="12.3">600</text>
</svg>
<svg style="left:0;top:0" width="1002" height="749" viewBox="0 0 1002 749" shape-rendering="crispEdges">
<defs><linearGradient id="vg" x1="0" y1="0" x2="1" y2="0"><stop offset="0" stop-color="#f4f2f4"/><stop offset="0.15" stop-color="#e0dee0"/><stop offset="0.3" stop-color="#cccacc"/><stop offset="1" stop-color="#a4a2a4"/></linearGradient><linearGradient id="hg" x1="0" y1="0" x2="0" y2="1"><stop offset="0" stop-color="#e2e0e2"/><stop offset="0.2" stop-color="#bebcbe"/><stop offset="0.8" stop-color="#b6b4b6"/><stop offset="1" stop-color="#9a989a"/></linearGradient></defs>
<rect x="981" y="181" width="17" height="547" fill="#c1bfc1"/>
<rect x="982" y="182" width="15" height="529" fill="#000"/>
<rect x="983" y="183" width="13" height="527" fill="#9e9e9e"/>
<rect x="983" y="183" width="13" height="13" fill="url(#vg)"/>
<rect x="983" y="183" width="13" height="1" fill="#e8e6e8"/>
<rect x="983" y="195" width="13" height="1" fill="#9c9a9c"/>
<rect x="983" y="196" width="13" height="1" fill="#000"/>
<rect x="983" y="208" width="13" height="1" fill="#000"/>
<rect x="983" y="209" width="13" height="16" fill="url(#vg)"/>
<rect x="983" y="209" width="13" height="1" fill="#e8e6e8"/>
<rect x="983" y="224" width="13" height="1" fill="#9c9a9c"/>
<rect x="983" y="225" width="13" height="1" fill="#000"/>
<rect x="983" y="697" width="13" height="1" fill="#000"/>
<rect x="983" y="698" width="13" height="12" fill="url(#vg)"/>
<rect x="983" y="698" width="13" height="1" fill="#e8e6e8"/>
<rect x="983" y="709" width="13" height="1" fill="#9c9a9c"/>
<rect x="986" y="212" width="7" height="1" fill="#8e8c8e"/>
<rect x="986" y="213" width="7" height="1" fill="#dedcde"/>
<rect x="986" y="216" width="7" height="1" fill="#8e8c8e"/>
<rect x="986" y="217" width="7" height="1" fill="#dedcde"/>
<rect x="986" y="220" width="7" height="1" fill="#8e8c8e"/>
<rect x="986" y="221" width="7" height="1" fill="#dedcde"/>
<path d="M984.800 192.200h9.400l-4.700-5.600z" fill="#000" shape-rendering="auto"/>
<path d="M984.800 701.600h9.400l-4.700 5.600z" fill="#000" shape-rendering="auto"/>
<rect x="4" y="712" width="977" height="16" fill="#000"/>
<rect x="5" y="713" width="975" height="13" fill="#9e9e9e"/>
<rect x="5" y="713" width="13" height="13" fill="url(#hg)"/>
<rect x="5" y="713" width="1" height="13" fill="#dcdadc"/>
<rect x="17" y="713" width="1" height="13" fill="#9c9a9c"/>
<rect x="18" y="713" width="2" height="13" fill="#000"/>
<rect x="20" y="713" width="804" height="13" fill="url(#hg)"/>
<rect x="20" y="713" width="1" height="13" fill="#dcdadc"/>
<rect x="823" y="713" width="1" height="13" fill="#9c9a9c"/>
<rect x="824" y="713" width="1" height="13" fill="#000"/>
<rect x="966" y="713" width="1" height="13" fill="#000"/>
<rect x="967" y="713" width="13" height="13" fill="url(#hg)"/>
<rect x="967" y="713" width="1" height="13" fill="#dcdadc"/>
<rect x="979" y="713" width="1" height="13" fill="#9c9a9c"/>
<rect x="417" y="716" width="1" height="7" fill="#8e8c8e"/>
<rect x="418" y="716" width="1" height="7" fill="#dedcde"/>
<rect x="421" y="716" width="1" height="7" fill="#8e8c8e"/>
<rect x="422" y="716" width="1" height="7" fill="#dedcde"/>
<rect x="425" y="716" width="1" height="7" fill="#8e8c8e"/>
<rect x="426" y="716" width="1" height="7" fill="#dedcde"/>
<path d="M14 715v9l-5-4.500z" fill="#000" shape-rendering="auto"/>
<path d="M971 715v9l5-4.500z" fill="#000" shape-rendering="auto"/>
<rect x="982" y="729" width="1" height="16" fill="#b6b4b6"/>
<rect x="983" y="729" width="1" height="16" fill="#f0eef0"/>
<path d="M996 733l-11 11M996 737l-7 7M996 741l-3 3" stroke="#8a888a" stroke-width="1" shape-rendering="auto"/>
</svg>
</body></html>
